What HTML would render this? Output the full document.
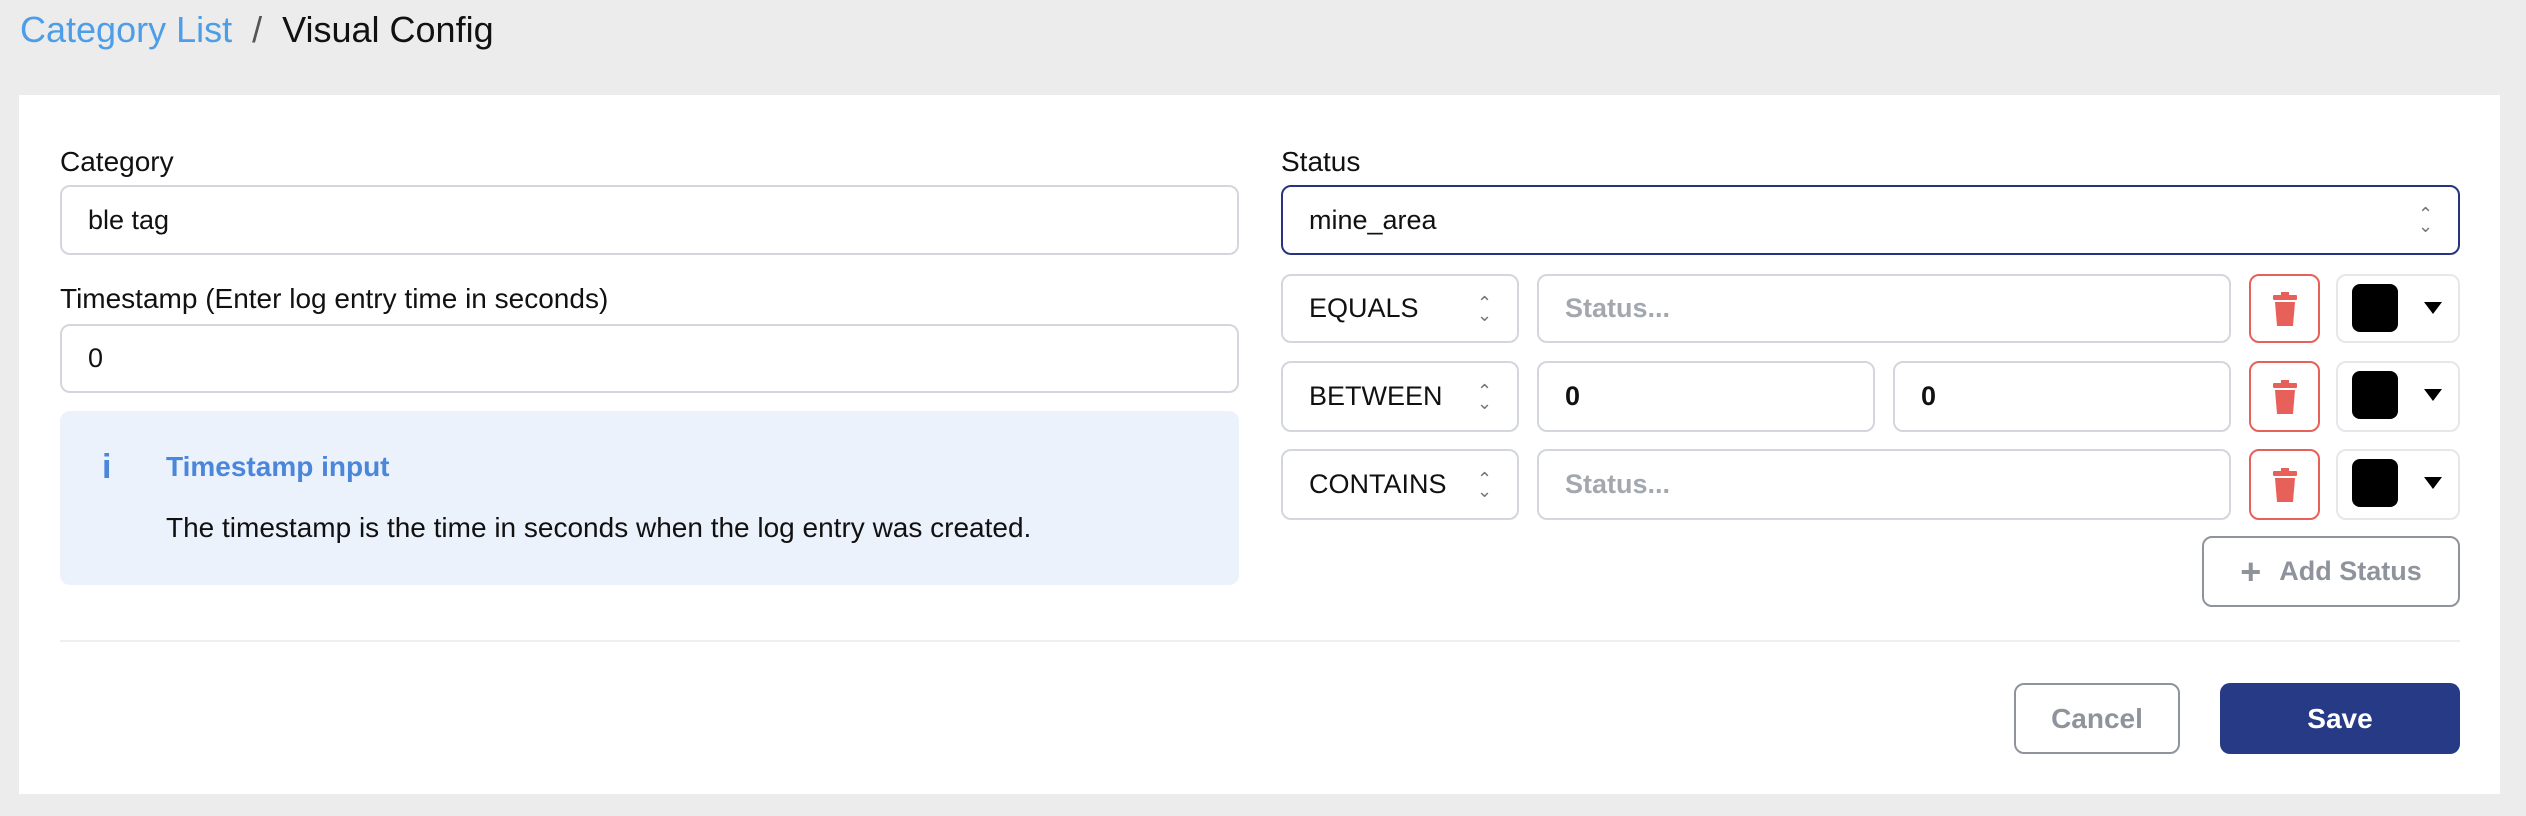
<!DOCTYPE html>
<html><head><meta charset="utf-8"><style>
*{box-sizing:border-box;margin:0;padding:0}
body{width:2526px;height:816px;background:#ececec;font-family:"Liberation Sans",sans-serif;position:relative;overflow:hidden;color:#111}
.a{position:absolute}
.crumb{left:20px;top:7px;font-size:36px;line-height:46px}
.card{left:19px;top:95px;width:2481px;height:699px;background:#fff}
.lbl{font-size:28px;line-height:32px}
.inp{border:2px solid #d3d6dc;border-radius:10px;background:#fff;font-size:27px;display:flex;align-items:center;padding-left:26px}
.ph{color:#a3a8b0;font-weight:bold}
.sel{justify-content:space-between;padding-right:26px}
.chev{font-size:18px;color:#777;line-height:12px;text-align:center;width:14px}
.del{border:2px solid #e8605a;border-radius:10px;display:flex;align-items:center;justify-content:center}
.col{border:2px solid #e6e7ea;border-radius:10px}
.sw{position:absolute;left:14px;top:8px;width:46px;height:48px;background:#000;border-radius:8px}
.tri{position:absolute;left:86px;top:26px;width:0;height:0;border-left:9px solid transparent;border-right:9px solid transparent;border-top:12px solid #000}
</style></head><body>
<div class="a crumb"><span style="color:#4d9de8">Category List</span><span style="color:#555">&nbsp; / &nbsp;</span><span>Visual Config</span></div>
<div class="a card"></div>

<div class="a lbl" style="left:60px;top:146px">Category</div>
<div class="a inp" style="left:60px;top:185px;width:1179px;height:70px">ble tag</div>
<div class="a lbl" style="left:60px;top:283px">Timestamp (Enter log entry time in seconds)</div>
<div class="a inp" style="left:60px;top:324px;width:1179px;height:69px">0</div>
<div class="a" style="left:60px;top:411px;width:1179px;height:174px;background:#ecf2fc;border-radius:10px"></div>
<div class="a" style="left:102px;top:448px;font:bold 34px 'Liberation Sans',sans-serif;color:#4a86d9">i</div>
<div class="a" style="left:166px;top:451px;font-size:28px;font-weight:bold;color:#4a86d9">Timestamp input</div>
<div class="a" style="left:166px;top:512px;font-size:28px">The timestamp is the time in seconds when the log entry was created.</div>

<div class="a lbl" style="left:1281px;top:146px">Status</div>
<div class="a inp sel" style="left:1281px;top:185px;width:1179px;height:70px;border-color:#27357f">mine_area<div class="chev">&#8963;<br>&#8964;</div></div>

<div class="a inp sel" style="left:1281px;top:274px;width:238px;height:69px">EQUALS<div class="chev">&#8963;<br>&#8964;</div></div>
<div class="a inp" style="left:1537px;top:274px;width:694px;height:69px"><span class="ph">Status...</span></div>
<div class="a del" style="left:2249px;top:274px;width:71px;height:69px"><svg width="26" height="34" viewBox="0 0 26 34"><rect x="9" y="0" width="8" height="4" fill="#e8605a"/><rect x="1" y="3" width="24" height="5" rx="1" fill="#e8605a"/><path d="M3 10h20l-2 24H5z" fill="#e8605a"/></svg></div>
<div class="a col" style="left:2336px;top:274px;width:124px;height:69px"><div class="sw"></div><div class="tri"></div></div>

<div class="a inp sel" style="left:1281px;top:361px;width:238px;height:71px">BETWEEN<div class="chev">&#8963;<br>&#8964;</div></div>
<div class="a inp" style="left:1537px;top:361px;width:338px;height:71px;font-weight:bold">0</div>
<div class="a inp" style="left:1893px;top:361px;width:338px;height:71px;font-weight:bold">0</div>
<div class="a del" style="left:2249px;top:361px;width:71px;height:71px"><svg width="26" height="34" viewBox="0 0 26 34"><rect x="9" y="0" width="8" height="4" fill="#e8605a"/><rect x="1" y="3" width="24" height="5" rx="1" fill="#e8605a"/><path d="M3 10h20l-2 24H5z" fill="#e8605a"/></svg></div>
<div class="a col" style="left:2336px;top:361px;width:124px;height:71px"><div class="sw"></div><div class="tri"></div></div>

<div class="a inp sel" style="left:1281px;top:449px;width:238px;height:71px">CONTAINS<div class="chev">&#8963;<br>&#8964;</div></div>
<div class="a inp" style="left:1537px;top:449px;width:694px;height:71px"><span class="ph">Status...</span></div>
<div class="a del" style="left:2249px;top:449px;width:71px;height:71px"><svg width="26" height="34" viewBox="0 0 26 34"><rect x="9" y="0" width="8" height="4" fill="#e8605a"/><rect x="1" y="3" width="24" height="5" rx="1" fill="#e8605a"/><path d="M3 10h20l-2 24H5z" fill="#e8605a"/></svg></div>
<div class="a col" style="left:2336px;top:449px;width:124px;height:71px"><div class="sw"></div><div class="tri"></div></div>

<div class="a" style="left:2202px;top:536px;width:258px;height:71px;border:2px solid #8f949c;border-radius:10px;display:flex;align-items:center;justify-content:center;color:#8f949c;font-size:27px;font-weight:bold"><span style="font-size:36px;margin-right:18px;line-height:30px">+</span>Add Status</div>

<div class="a" style="left:60px;top:640px;width:2400px;height:2px;background:#eeeff1"></div>

<div class="a" style="left:2014px;top:683px;width:166px;height:71px;border:2px solid #8f949c;border-radius:10px;display:flex;align-items:center;justify-content:center;color:#8f949c;font-size:28px;font-weight:bold">Cancel</div>
<div class="a" style="left:2220px;top:683px;width:240px;height:71px;background:#273a85;border-radius:10px;display:flex;align-items:center;justify-content:center;color:#fff;font-size:28px;font-weight:bold">Save</div>
</body></html>
